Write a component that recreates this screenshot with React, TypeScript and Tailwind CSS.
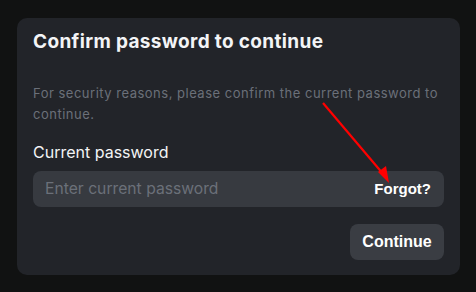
export default function App() {
  return (
    <div className="relative w-[476px] h-[292px] bg-[#111212] pt-[18px] pl-[17px] font-['Inter',sans-serif]">
      <div className="w-[443px] h-[257px] rounded-[10px] bg-[#222429] px-4 pt-[10px]">
        <h2 className="text-[19px] leading-[28px] font-bold text-[#f3f4f6] tracking-[0.35px]">
          Confirm password to continue
        </h2>
        <p className="mt-[27px] text-[13px] leading-[21px] text-[#6b7079] tracking-[0.5px]">
          For security reasons, please confirm the current password to continue.
        </p>
        <label className="block mt-[16px] text-[16px] leading-[22px] text-[#f3f4f6]">
          Current password
        </label>
        <div className="mt-[8px] flex items-center justify-between h-9 w-[411px] rounded-lg bg-[#373a40] pl-3 pr-[13px]">
          <span className="text-[15.7px] text-[#6b7079]">Enter current password</span>
          <span className="font-['Liberation_Sans',sans-serif] font-bold text-[15px] text-white">Forgot?</span>
        </div>
        <div className="mt-[17px] flex justify-end w-[411px]">
          <button className="h-9 w-[94px] rounded-lg bg-[#3a3d43] font-['Liberation_Sans',sans-serif] font-bold text-[16px] text-white">
            Continue
          </button>
        </div>
      </div>
      <svg className="absolute left-0 top-0 pointer-events-none" width="476" height="292">
        <line x1="323" y1="103" x2="384" y2="175" stroke="#ff0000" strokeWidth="2.2" />
        <polygon points="389,183 378,172 386,166" fill="#ff0000" />
      </svg>
    </div>
  );
}
